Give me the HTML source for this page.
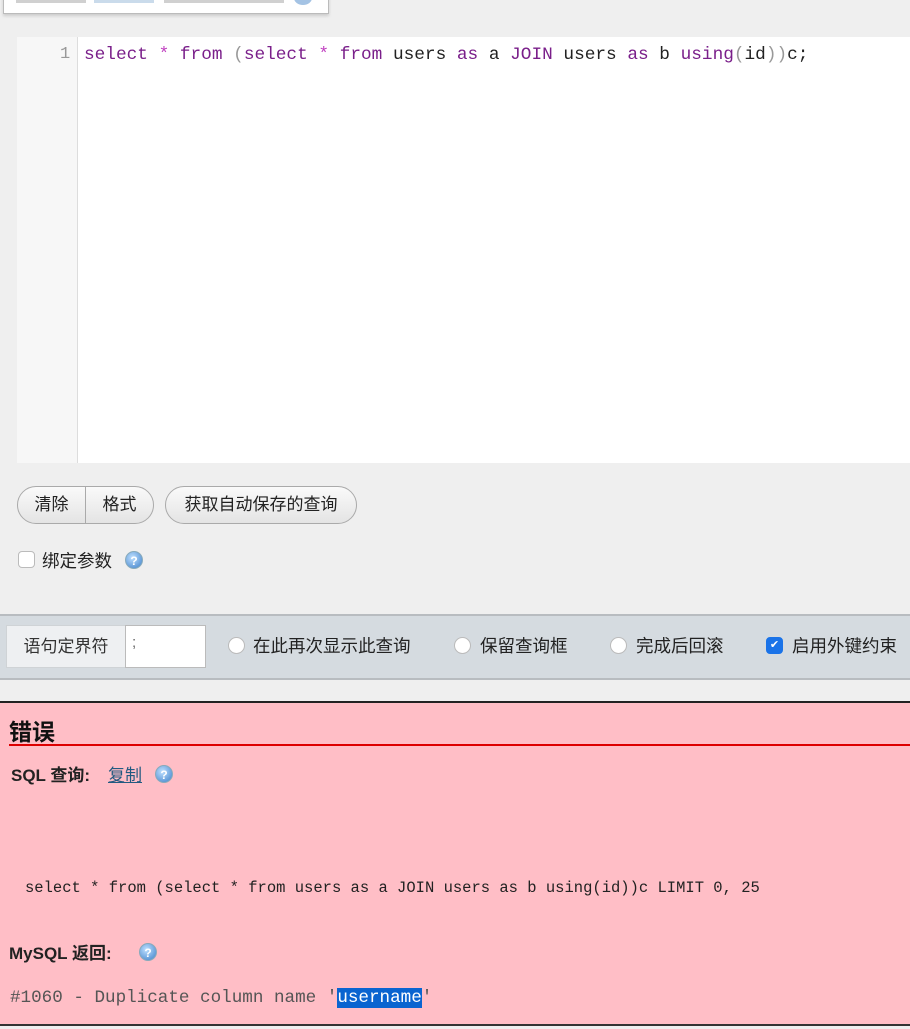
<!DOCTYPE html>
<html><head><meta charset="utf-8"><style>
*{margin:0;padding:0;box-sizing:border-box}
body{width:910px;height:1029px;background:#efefef;position:relative;overflow:hidden;font-family:"Liberation Sans","Noto Sans CJK SC",sans-serif;color:#222}
.abs{position:absolute}
.mono{font-family:"Liberation Mono","Courier New",monospace}
.tip{left:3px;top:-10px;width:326px;height:24px;background:#fff;border:1px solid #bbb;box-shadow:0 2px 3px rgba(0,0,0,.15)}
.gut{left:17px;top:37px;width:61px;height:426px;background:#f7f7f7;border-right:1px solid #ddd}
.ed{left:78px;top:37px;width:832px;height:426px;background:#fff}
.code{left:84px;top:45px;font-size:17.75px;white-space:pre;color:#222}
.k{color:#7a1f8a}.s{color:#c040c0}.p{color:#999}
.ln{left:60px;top:45px;font-size:17px;color:#999}
.btn{top:486px;height:38px;border:1px solid #aaa;background:linear-gradient(#fafafa,#e4e4e4);font-size:17px;line-height:36px;text-align:center}
.help{width:18px;height:18px;border-radius:50%;background:radial-gradient(circle at 40% 35%,#bfe0ff,#3c7fc9);color:#fff;font-size:12px;font-weight:bold;text-align:center;line-height:18px;border:1px solid #8ab}
.cb{width:17px;height:17px;border:1px solid #bbb;border-radius:4px;background:#fff}
.bar{left:0;top:614px;width:910px;height:66px;background:#d5dbe0;border-top:2px solid #b8bcc0;border-bottom:2px solid #b8bcc0}
.lab{font-size:17.5px}
.err{left:0;top:701px;width:910px;height:325px;background:#ffbec6;border-top:2px solid #222;border-bottom:2px solid #333}
</style></head><body>
<div class="abs tip"><div class="abs" style="left:12px;top:4px;width:70px;height:8px;background:#444;opacity:.25"></div><div class="abs" style="left:90px;top:4px;width:60px;height:8px;background:#2a6fb0;opacity:.25"></div><div class="abs" style="left:160px;top:4px;width:120px;height:8px;background:#444;opacity:.25"></div><div class="abs" style="left:290px;top:0px;width:18px;height:14px;border-radius:50%;background:#4a87c9;opacity:.5"></div></div>
<div class="abs gut"></div><div class="abs ed"></div>
<div class="abs mono ln">1</div>
<div class="abs mono code"><span class="k">select</span> <span class="s">*</span> <span class="k">from</span> <span class="p">(</span><span class="k">select</span> <span class="s">*</span> <span class="k">from</span> users <span class="k">as</span> a <span class="k">JOIN</span> users <span class="k">as</span> b <span class="k">using</span><span class="p">(</span>id<span class="p">))</span>c;</div>

<div class="abs btn" style="left:17px;width:69px;border-radius:19px 0 0 19px">清除</div>
<div class="abs btn" style="left:85px;width:69px;border-radius:0 19px 19px 0">格式</div>
<div class="abs btn" style="left:165px;width:192px;border-radius:19px">获取自动保存的查询</div>
<div class="abs cb" style="left:18px;top:551px"></div>
<div class="abs lab" style="left:42px;top:548px">绑定参数</div>
<div class="abs help" style="left:125px;top:551px">?</div>

<div class="abs bar"></div>
<div class="abs" style="left:6px;top:625px;width:120px;height:43px;background:#eef0f2;border:1px solid #cfd3d6;font-size:17px;line-height:41px;text-align:center;color:#333">语句定界符</div>
<div class="abs" style="left:125px;top:625px;width:81px;height:43px;background:#fff;border:1px solid #bbb;font-size:15px;padding:8px 6px;color:#666">;</div>
<div class="abs cb" style="left:228px;top:637px;border-radius:50%"></div><div class="abs lab" style="left:253px;top:633px">在此再次显示此查询</div>
<div class="abs cb" style="left:454px;top:637px;border-radius:50%"></div><div class="abs lab" style="left:480px;top:633px">保留查询框</div>
<div class="abs cb" style="left:610px;top:637px;border-radius:50%"></div><div class="abs lab" style="left:636px;top:633px">完成后回滚</div>
<div class="abs cb" style="left:766px;top:637px;background:#1a73e8;border-color:#1a73e8;color:#fff;font-size:11px;line-height:15px;text-align:center">✔</div><div class="abs lab" style="left:792px;top:633px">启用外键约束</div>

<div class="abs err"></div>
<div class="abs" style="left:9px;top:713px;font-size:23px;font-weight:bold;color:#111">错误</div>
<div class="abs" style="left:9px;top:744px;width:901px;height:2px;background:#d00"></div>
<div class="abs" style="left:11px;top:761px;font-size:17px;font-weight:bold">SQL 查询:</div>
<div class="abs" style="left:108px;top:761px;font-size:17px;color:#235a81;text-decoration:underline">复制</div>
<div class="abs help" style="left:155px;top:765px">?</div>
<div class="abs mono" style="left:25px;top:879px;font-size:15.5px;color:#222;white-space:pre">select * from (select * from users as a JOIN users as b using(id))c LIMIT 0, 25</div>
<div class="abs" style="left:9px;top:939px;font-size:17px;font-weight:bold">MySQL 返回:</div>
<div class="abs help" style="left:139px;top:943px">?</div>
<div class="abs mono" style="left:10px;top:988px;font-size:17.6px;color:#555;white-space:pre">#1060 - Duplicate column name '<span style="background:#0a64d0;color:#fff">username</span>'</div>
</body></html>
